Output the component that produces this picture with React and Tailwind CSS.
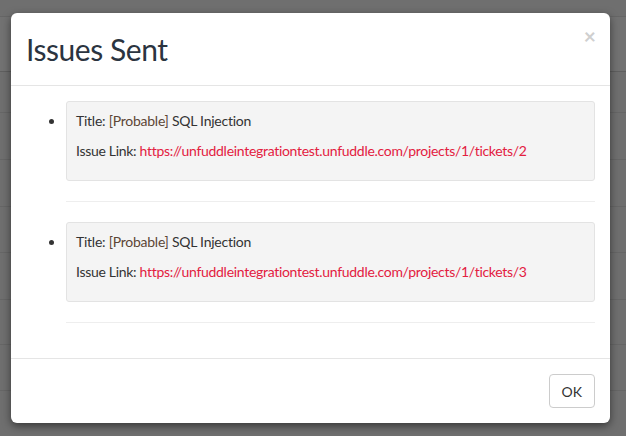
import React from "react";

const font = { fontFamily: "Lato, 'Open Sans', sans-serif" };

function Issue({ n }) {
  return (
    <li className="list-disc">
      <div className="rounded-[3px] border border-[#e3e3e3] bg-[#f4f4f4] px-[9px] pt-[9px] pb-[9px]">
        <p className="mb-[10px] text-[14px] leading-[20px] text-[#333] tracking-[-0.25px]">
          Title: <span className="text-[#5c4636]">[Probable]</span> SQL Injection
        </p>
        <p className="mb-[10px] text-[14px] leading-[20px] text-[#333] tracking-[-0.3px]">
          Issue Link:{" "}
          <a className="text-[#e3203f]" href="#">
            https://unfuddleintegrationtest.unfuddle.com/projects/1/tickets/{n}
          </a>
        </p>
      </div>
      <hr className="my-[20px] border-t border-[#eeeeee]" />
    </li>
  );
}

export default function App() {
  const rows = [17, 55, 41, 47, 47, 46, 47, 45, 46];
  return (
    <div className="relative h-[436px] w-[626px] overflow-hidden bg-[#6f6f6f]" style={font}>
      <div className="flex flex-col">
        {rows.map((h, i) => (
          <div
            key={i}
            className={
              i === 1
                ? "border-b border-[#5f5f5f] bg-[#727272]"
                : "border-b border-[#666666]"
            }
            style={{ height: h }}
          />
        ))}
        <div className="pl-[22px] pt-[26px]">
          <div className="h-[4px] w-[53px] rounded-b-[3px] bg-[#2c4a2e]" />
        </div>
      </div>

      <div className="absolute left-[11px] top-[13px] w-[599px] rounded-[6px] bg-white shadow-[0_3px_9px_rgba(0,0,0,0.5)]">
        <div className="flex items-start justify-between border-b border-[#e5e5e5] px-[15px] pt-[15px] pb-[15px] h-[73px]">
          <h3 className="text-[30px] leading-[42px] text-[#2b3440]" style={{ letterSpacing: "-0.45px" }}>
            Issues Sent
          </h3>
          <button className="-mt-[3px] -mr-[1px] text-[21px] font-bold leading-none text-[#cfcfcf]">×</button>
        </div>
        <div className="px-[15px] pt-[15px] pb-[15px]">
          <ul className="pl-[40px] mb-[0px] text-[#333]">
            <Issue n={2} />
            <Issue n={3} />
          </ul>
        </div>
        <div className="flex justify-end border-t border-[#e5e5e5] p-[15px]">
          <button className="h-[34px] rounded-[4px] border border-[#cccccc] bg-white px-[12px] text-[14px] text-[#333]">
            OK
          </button>
        </div>
      </div>
    </div>
  );
}
